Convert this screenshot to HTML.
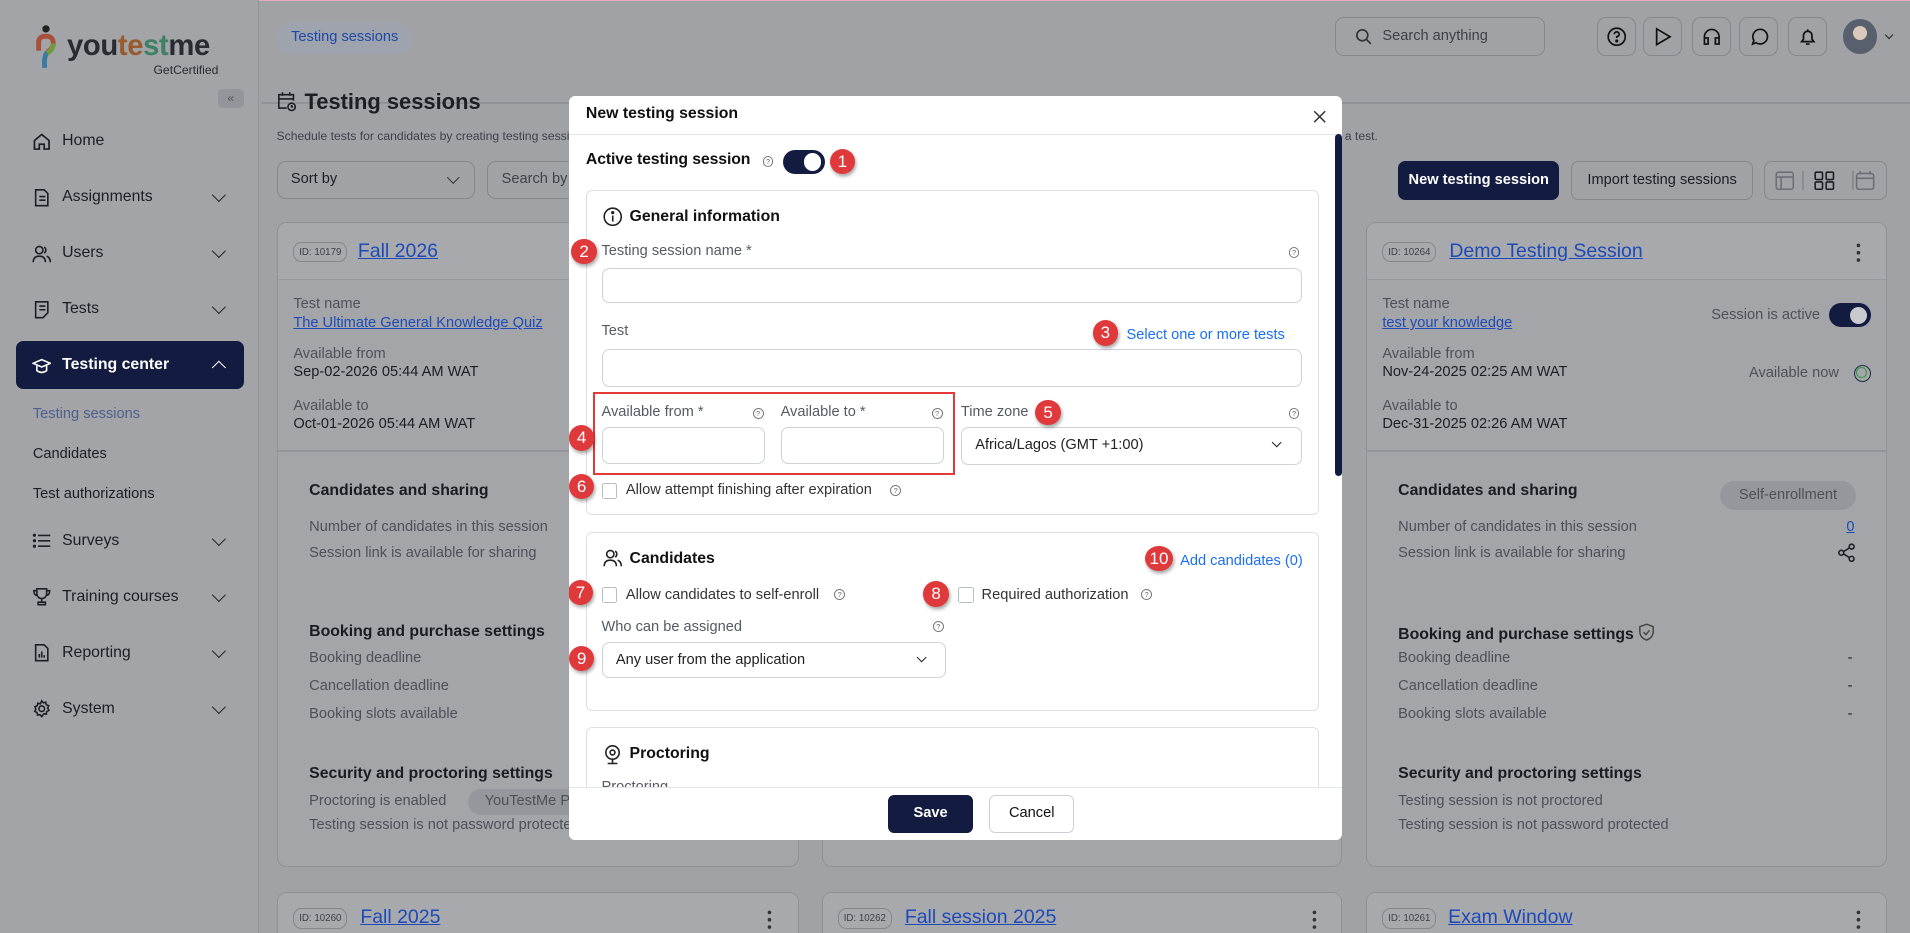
<!DOCTYPE html>
<html><head><meta charset="utf-8">
<style>
*{box-sizing:border-box;margin:0;padding:0}
html,body{width:1910px;height:933px;overflow:hidden;background:#a0a2a6}
#w{position:absolute;left:0;top:0;width:1568px;height:766px;zoom:1.21811;font-family:"Liberation Sans",sans-serif;color:#1c1e24;background:#a0a2a6;overflow:hidden}
.a{position:absolute;white-space:nowrap}
.side{position:absolute;left:0;top:0;width:213px;height:766px;background:#a2a4a8;border-right:1px solid #929499}
.nav{position:absolute;left:26px;font-size:13px;color:#1c1e24;display:flex;align-items:center;gap:9px}
.chev{position:absolute;left:176px;width:8px;height:8px;border-right:1.6px solid #1c1e24;border-bottom:1.6px solid #1c1e24;transform:rotate(45deg)}
.card{position:absolute;background:#a3a5a9;border:1px solid #8f9196;border-radius:8px;overflow:hidden}
.ch{position:absolute;left:0;right:0;top:0;height:47px;background:#a7a9ad;border-bottom:1px solid #96989d}
.id{position:absolute;font-size:8px;color:#3b3e44;border:1px solid #85878c;border-radius:7px;padding:3px 4px;background:#a7a9ad}
.lnk{color:#1e4ab8;text-decoration:underline}
.mut{color:#4d5057;font-size:12px}
.bt{font-weight:bold;font-size:13px;color:#1a1c22}
.ib{position:absolute;top:14px;width:32px;height:32px;border:1px solid #86888d;border-radius:7px;display:flex;align-items:center;justify-content:center}
.modal{position:absolute;left:467px;top:79px;width:635px;height:611px;background:#fff;border-radius:5px;overflow:hidden}
.box{position:absolute;left:14px;width:602px;border:1px solid #dde0e5;border-radius:5px}
.lab{position:absolute;font-size:12px;color:#555a63}
.inp{position:absolute;border:1px solid #cfd3d9;border-radius:6px;background:#fff}
.q{position:absolute;width:9px;height:9px;border:1px solid #777;border-radius:50%;font-size:6px;line-height:8px;text-align:center;color:#666}
.b{position:absolute;width:21px;height:21px;border-radius:50%;background:#e0393b;color:#fff;font-size:14px;line-height:21px;text-align:center;box-shadow:1px 2px 3px rgba(0,0,0,.35)}
.cb{position:absolute;width:13px;height:13px;border:1px solid #b8bcc3;border-radius:2px}
.blue{color:#1b6ef3;font-size:12px}
</style></head><body><div id="w">
<div style="position:absolute;left:0;top:0;right:0;height:1px;background:#e8a9c2"></div>
<!-- sidebar -->
<div class="side">
 <svg class="a" style="left:29px;top:20px" width="20" height="40" viewBox="0 0 20 40"><circle cx="9" cy="4" r="3" fill="#222"/><path d="M3 22 V15 Q3 10 9 10 Q15 10 15 16 Q15 20 10 23" stroke="#a8503a" stroke-width="4" fill="none"/><path d="M10 23 Q7 27 8 36" stroke="#3a7aa0" stroke-width="4" fill="none"/><path d="M15 16 Q15 21 10 24" stroke="#6f9a40" stroke-width="4" fill="none"/></svg>
 <div class="a" style="left:55px;top:25px;font-size:24px;font-weight:bold;letter-spacing:-0.3px;color:#2a2b30">you<span style="color:#9a5a30">te</span><span style="color:#3f7f63">st</span>me</div>
 <div class="a" style="left:126px;top:52px;font-size:10px;color:#2a2b30">GetCertified</div>
 <div class="a" style="left:179px;top:73px;width:21px;height:16px;background:#93959a;border-radius:4px;font-size:10px;color:#555;text-align:center;line-height:15px">«</div>
 <div class="nav" style="top:108px"><svg width="16" height="16" viewBox="0 0 16 16" fill="none" stroke="#1c1e24" stroke-width="1.4"><path d="M2 14V7L8 2l6 5v7h-4V10H6v4z"/></svg>Home</div>
 <div class="nav" style="top:154px"><svg width="16" height="16" viewBox="0 0 16 16" fill="none" stroke="#1c1e24" stroke-width="1.3"><path d="M3 1.5h7l3 3v10H3z M6 7h5 M6 10h5"/></svg>Assignments</div><div class="chev" style="top:156px"></div>
 <div class="nav" style="top:200px"><svg width="16" height="16" viewBox="0 0 16 16" fill="none" stroke="#1c1e24" stroke-width="1.3"><circle cx="6" cy="5" r="3"/><path d="M1 15q0-5 5-5t5 5M10 2.5a3 3 0 010 5M12 10q3 1 3 5"/></svg>Users</div><div class="chev" style="top:202px"></div>
 <div class="nav" style="top:246px"><svg width="16" height="16" viewBox="0 0 16 16" fill="none" stroke="#1c1e24" stroke-width="1.3"><path d="M3 1.5h10v9l-4 4H3z M6 5h5 M6 8h5"/></svg>Tests</div><div class="chev" style="top:248px"></div>
 <div class="a" style="left:13px;top:280px;width:187px;height:39px;background:#131b40;border-radius:6px"></div>
 <div class="nav" style="top:292px;color:#fff;font-weight:bold"><svg width="16" height="16" viewBox="0 0 16 16" fill="none" stroke="#fff" stroke-width="1.3"><path d="M1 6l7-3 7 3-7 3z M4 8v4q4 3 8 0V8"/></svg>Testing center</div><div class="chev" style="top:298px;border-color:#fff;transform:rotate(-135deg)"></div>
 <div class="a" style="left:27px;top:333px;font-size:12px;color:#4f5e8c">Testing sessions</div>
 <div class="a" style="left:27px;top:366px;font-size:12px">Candidates</div>
 <div class="a" style="left:27px;top:399px;font-size:12px">Test authorizations</div>
 <div class="nav" style="top:436px"><svg width="16" height="16" viewBox="0 0 16 16" fill="#1c1e24"><circle cx="2" cy="3.5" r="1.3"/><circle cx="2" cy="8" r="1.3"/><circle cx="2" cy="12.5" r="1.3"/><rect x="5" y="3" width="10" height="1.3"/><rect x="5" y="7.4" width="10" height="1.3"/><rect x="5" y="11.8" width="10" height="1.3"/></svg>Surveys</div><div class="chev" style="top:438px"></div>
 <div class="nav" style="top:482px"><svg width="16" height="16" viewBox="0 0 16 16" fill="none" stroke="#1c1e24" stroke-width="1.3"><path d="M4 1.5h8v4a4 4 0 01-8 0z M8 9.5v3 M5 14.5h6v-2H5z M4 3H1.5q0 4 3 4 M12 3h2.5q0 4-3 4"/></svg>Training courses</div><div class="chev" style="top:484px"></div>
 <div class="nav" style="top:528px"><svg width="16" height="16" viewBox="0 0 16 16" fill="none" stroke="#1c1e24" stroke-width="1.3"><path d="M3 1.5h7l3 3v10H3z M6 12V9 M8 12V7 M10 12v-2"/></svg>Reporting</div><div class="chev" style="top:530px"></div>
 <div class="nav" style="top:574px"><svg width="16" height="16" viewBox="0 0 16 16" fill="none" stroke="#1c1e24" stroke-width="1.3"><circle cx="8" cy="8" r="2.3"/><path d="M8 1.5l1.3 1.7 2-.6.4 2.1 2 .8-.8 2 1 1.9-1.9.9-.2 2.1-2.1-.2L8 14.5l-1.4-1.6-2.1.3-.3-2.1-1.9-.9.9-1.9-.8-2 2-.8.4-2.1 2 .6z"/></svg>System</div><div class="chev" style="top:576px"></div>
</div>
<!-- header -->
<div class="a" style="left:214px;top:84px;width:1354px;height:1px;background:#909297"></div>
<div class="a" style="left:227px;top:18px;width:112px;height:26px;background:#9ea3ad;border-radius:13px;font-size:12px;color:#1d4aa8;line-height:26px;text-align:center">Testing sessions</div>
<div class="a" style="left:1096px;top:14px;width:172px;height:32px;border:1px solid #86888d;border-radius:7px;font-size:12px;color:#3c3f46;line-height:30px;padding-left:38px">Search anything</div>
<svg class="a" style="left:1112px;top:23px" width="14" height="14" viewBox="0 0 14 14" fill="none" stroke="#333" stroke-width="1.4"><circle cx="6" cy="6" r="4.5"/><path d="M9.5 9.5L13 13"/></svg>
<div class="ib" style="left:1311px"><svg width="16" height="16" viewBox="0 0 16 16" fill="none" stroke="#111" stroke-width="1.4"><circle cx="8" cy="8" r="7"/><path d="M6 6a2 2 0 114 0q0 1.5-2 2v1"/><circle cx="8" cy="11.5" r=".6" fill="#111"/></svg></div>
<div class="ib" style="left:1349px"><svg width="16" height="16" viewBox="0 0 16 16" fill="none" stroke="#111" stroke-width="1.4"><path d="M3 1.5l11 6.5-11 6.5z"/></svg></div>
<div class="ib" style="left:1389px"><svg width="16" height="16" viewBox="0 0 16 16" fill="none" stroke="#111" stroke-width="1.4"><path d="M2 10V8a6 6 0 0112 0v2 M2 9h3v5H2z M11 9h3v5h-3z"/></svg></div>
<div class="ib" style="left:1428px"><svg width="16" height="16" viewBox="0 0 16 16" fill="none" stroke="#111" stroke-width="1.4"><path d="M3 14l1-3a6 6 0 111.8 1.9z"/></svg></div>
<div class="ib" style="left:1468px"><svg width="16" height="16" viewBox="0 0 16 16" fill="none" stroke="#111" stroke-width="1.4"><path d="M3 12h10l-1.5-2V7a3.5 3.5 0 00-7 0v3z M6.5 14h3 M8 2v1"/></svg></div>
<div class="a" style="left:1513px;top:16px;width:28px;height:28px;border-radius:50%;background:radial-gradient(circle at 50% 40%,#d9c8bb 0 25%,#57606c 27% 100%)"></div>
<div class="a" style="left:1548px;top:26px;width:5px;height:5px;border-right:1.4px solid #222;border-bottom:1.4px solid #222;transform:rotate(45deg)"></div>
<!-- page title -->
<svg class="a" style="left:227px;top:75px" width="16" height="17" viewBox="0 0 16 17" fill="none" stroke="#1c1e24" stroke-width="1.3"><path d="M8 14H1.5V3h12v5 M1.5 6.5h12 M4.5 1v3 M10.5 1v3"/><circle cx="12" cy="13" r="3"/><path d="M12 11.5V13h1.2"/></svg>
<div class="a" style="left:250px;top:73px;font-size:18px;font-weight:bold">Testing sessions</div>
<div class="a" style="left:227px;top:106px;font-size:10px;color:#3e4148">Schedule tests for candidates by creating testing sessions</div>
<div class="a" style="left:1104px;top:106px;font-size:10px;color:#3e4148">a test.</div>
<div class="a" style="left:227px;top:132px;width:163px;height:31px;border:1px solid #86888d;border-radius:7px;font-size:12px;line-height:29px;padding-left:11px">Sort by</div>
<div class="a" style="left:369px;top:142px;width:7px;height:7px;border-right:1.4px solid #333;border-bottom:1.4px solid #333;transform:rotate(45deg)"></div>
<div class="a" style="left:400px;top:132px;width:80px;height:31px;border:1px solid #86888d;border-radius:7px;font-size:12px;line-height:29px;padding-left:11px;color:#3e4148">Search by</div>
<div class="a" style="left:1148px;top:132px;width:132px;height:32px;background:#131b40;border-radius:6px;color:#fff;font-size:12px;font-weight:bold;line-height:32px;text-align:center">New testing session</div>
<div class="a" style="left:1290px;top:132px;width:149px;height:32px;border:1px solid #86888d;border-radius:6px;font-size:12px;line-height:30px;text-align:center">Import testing sessions</div>
<div class="a" style="left:1448px;top:132px;width:101px;height:32px;border:1px solid #86888d;border-radius:6px"></div>
<svg class="a" style="left:1457px;top:140px" width="85" height="16" viewBox="0 0 85 16" fill="none" stroke-width="1.3"><rect x="1" y="1" width="14" height="14" rx="2" stroke="#6c6f76"/><path d="M1 5h14 M5 5v10" stroke="#6c6f76"/><path d="M23 -2v20 M64 -2v20" stroke="#85878c"/><g stroke="#1c1e24"><rect x="33" y="1" width="6" height="6" rx="1"/><rect x="42" y="1" width="6" height="6" rx="1"/><rect x="33" y="9" width="6" height="6" rx="1"/><rect x="42" y="9" width="6" height="6" rx="1"/></g><rect x="67" y="2" width="14" height="13" rx="2" stroke="#6c6f76"/><path d="M67 6h14 M70 0v3 M78 0v3" stroke="#6c6f76"/></svg>
<!-- card 1 -->
<div class="card" style="left:227px;top:182px;width:429px;height:530px">
 <div class="ch"></div>
 <div class="id" style="left:13px;top:16px">ID: 10179</div>
 <div class="a lnk" style="left:66px;top:14px;font-size:16px">Fall 2026</div>
 <div class="a mut" style="left:13px;top:60px">Test name</div>
 <div class="a lnk" style="left:13px;top:76px;font-size:12px">The Ultimate General Knowledge Quiz</div>
 <div class="a mut" style="left:13px;top:101px">Available from</div>
 <div class="a" style="left:13px;top:116px;font-size:12px">Sep-02-2026 05:44 AM WAT</div>
 <div class="a mut" style="left:13px;top:144px">Available to</div>
 <div class="a" style="left:13px;top:159px;font-size:12px">Oct-01-2026 05:44 AM WAT</div>
 <div class="a" style="left:0;right:0;top:187px;height:1px;background:#93959a"></div>
 <div class="a bt" style="left:26px;top:213px">Candidates and sharing</div>
 <div class="a mut" style="left:26px;top:243px">Number of candidates in this session</div>
 <div class="a mut" style="left:26px;top:265px">Session link is available for sharing</div>
 <div class="a bt" style="left:26px;top:329px">Booking and purchase settings</div>
 <div class="a mut" style="left:26px;top:351px">Booking deadline</div>
 <div class="a mut" style="left:26px;top:374px">Cancellation deadline</div>
 <div class="a mut" style="left:26px;top:397px">Booking slots available</div>
 <div class="a bt" style="left:26px;top:445px">Security and proctoring settings</div>
 <div class="a mut" style="left:26px;top:468px">Proctoring is enabled</div>
 <div class="a" style="left:156px;top:465px;width:120px;height:21px;background:#95979c;border-radius:11px;font-size:12px;color:#4d5057;line-height:21px;padding-left:14px">YouTestMe Proctoring</div>
 <div class="a mut" style="left:26px;top:488px">Testing session is not password protected</div>
</div>
<div class="card" style="left:675px;top:182px;width:427px;height:530px"><div class="ch"></div></div>
<!-- card 3 -->
<div class="card" style="left:1121px;top:182px;width:428px;height:530px">
 <div class="ch"></div>
 <div class="id" style="left:13px;top:16px">ID: 10264</div>
 <div class="a lnk" style="left:68px;top:14px;font-size:16px">Demo Testing Session</div>
 <svg class="a" style="left:402px;top:17px" width="4" height="16"><circle cx="2" cy="2" r="1.5" fill="#333"/><circle cx="2" cy="8" r="1.5" fill="#333"/><circle cx="2" cy="14" r="1.5" fill="#333"/></svg>
 <div class="a mut" style="left:13px;top:60px">Test name</div>
 <div class="a lnk" style="left:13px;top:76px;font-size:12px">test your knowledge</div>
 <div class="a mut" style="left:283px;top:69px">Session is active</div>
 <div class="a" style="left:380px;top:66px;width:34px;height:20px;background:#131b40;border-radius:10px"><div style="position:absolute;right:3px;top:3px;width:14px;height:14px;border-radius:50%;background:#c8cacd"></div></div>
 <div class="a mut" style="left:13px;top:101px">Available from</div>
 <div class="a" style="left:13px;top:116px;font-size:12px">Nov-24-2025 02:25 AM WAT</div>
 <div class="a mut" style="left:314px;top:117px">Available now</div>
 <div class="a" style="left:400px;top:117px;width:14px;height:14px;border:1.5px solid #1f2a3c;border-radius:50%;background:#a3a5a9"><div style="margin:1px;width:9px;height:9px;border:1.5px solid #2e9a45;border-radius:50%"></div></div>
 <div class="a mut" style="left:13px;top:144px">Available to</div>
 <div class="a" style="left:13px;top:159px;font-size:12px">Dec-31-2025 02:26 AM WAT</div>
 <div class="a" style="left:0;right:0;top:187px;height:1px;background:#93959a"></div>
 <div class="a bt" style="left:26px;top:213px">Candidates and sharing</div>
 <div class="a" style="left:290px;top:212px;width:112px;height:24px;background:#95979c;border-radius:12px;font-size:12px;color:#4d5057;line-height:24px;text-align:center">Self-enrollment</div>
 <div class="a mut" style="left:26px;top:243px">Number of candidates in this session</div>
 <div class="a lnk" style="left:394px;top:243px;font-size:12px">0</div>
 <div class="a mut" style="left:26px;top:265px">Session link is available for sharing</div>
 <svg class="a" style="left:386px;top:263px" width="16" height="16" viewBox="0 0 16 16" fill="none" stroke="#1c1e24" stroke-width="1.3"><circle cx="3.5" cy="8" r="2"/><circle cx="12" cy="3" r="2"/><circle cx="12" cy="13" r="2"/><path d="M5.3 7l5-3 M5.3 9l5 3"/></svg>
 <div class="a bt" style="left:26px;top:329px">Booking and purchase settings <svg width="14" height="15" viewBox="0 0 14 15" fill="none" stroke="#444" stroke-width="1.2" style="vertical-align:-2px"><path d="M7 1l5.5 2v4q0 5-5.5 7Q1.5 12 1.5 7V3z M4.5 7.5l2 2 3-3.5"/></svg></div>
 <div class="a mut" style="left:26px;top:351px">Booking deadline</div><div class="a" style="left:395px;top:351px;font-size:12px">-</div>
 <div class="a mut" style="left:26px;top:374px">Cancellation deadline</div><div class="a" style="left:395px;top:374px;font-size:12px">-</div>
 <div class="a mut" style="left:26px;top:397px">Booking slots available</div><div class="a" style="left:395px;top:397px;font-size:12px">-</div>
 <div class="a bt" style="left:26px;top:445px">Security and proctoring settings</div>
 <div class="a mut" style="left:26px;top:468px">Testing session is not proctored</div>
 <div class="a mut" style="left:26px;top:488px">Testing session is not password protected</div>
</div>
<!-- row 2 -->
<div class="card" style="left:227px;top:732px;width:429px;height:60px"><div class="ch"></div><div class="id" style="left:13px;top:13px">ID: 10260</div><div class="a lnk" style="left:68px;top:11px;font-size:16px">Fall 2025</div><svg class="a" style="left:402px;top:14px" width="4" height="16"><circle cx="2" cy="2" r="1.5" fill="#333"/><circle cx="2" cy="8" r="1.5" fill="#333"/><circle cx="2" cy="14" r="1.5" fill="#333"/></svg></div>
<div class="card" style="left:675px;top:732px;width:427px;height:60px"><div class="ch"></div><div class="id" style="left:12px;top:13px">ID: 10262</div><div class="a lnk" style="left:67px;top:11px;font-size:16px">Fall session 2025</div><svg class="a" style="left:401px;top:14px" width="4" height="16"><circle cx="2" cy="2" r="1.5" fill="#333"/><circle cx="2" cy="8" r="1.5" fill="#333"/><circle cx="2" cy="14" r="1.5" fill="#333"/></svg></div>
<div class="card" style="left:1121px;top:732px;width:428px;height:60px"><div class="ch"></div><div class="id" style="left:13px;top:13px">ID: 10261</div><div class="a lnk" style="left:67px;top:11px;font-size:16px">Exam Window</div><svg class="a" style="left:402px;top:14px" width="4" height="16"><circle cx="2" cy="2" r="1.5" fill="#333"/><circle cx="2" cy="8" r="1.5" fill="#333"/><circle cx="2" cy="14" r="1.5" fill="#333"/></svg></div>
<!-- modal -->
<div class="modal">
 <div class="a" style="left:14px;top:7px;font-size:13px;font-weight:bold;color:#111">New testing session</div>
 <svg class="a" style="left:611px;top:11px" width="11" height="11" viewBox="0 0 11 11" stroke="#333" stroke-width="1.2"><path d="M1 1l9 9M10 1l-9 9"/></svg>
 <div class="a" style="left:0;right:0;top:31px;height:1px;background:#e2e5ea"></div>
 <div class="a" style="left:629px;top:31px;width:6px;height:281px;background:#131b40;border-radius:3px"></div>
 <div class="a" style="left:14px;top:45px;font-size:13px;font-weight:bold;color:#111;letter-spacing:-0.1px">Active testing session</div>
 <div class="q" style="left:159px;top:49px">?</div>
 <div class="a" style="left:176px;top:44px;width:34px;height:20px;background:#131b40;border-radius:10px"><div style="position:absolute;right:3px;top:3px;width:14px;height:14px;border-radius:50%;background:#fff"></div></div>
 <div class="b" style="left:214px;top:43px">1</div>
 <!-- general -->
 <div class="box" style="top:77px;height:267px">
  <svg class="a" style="left:13px;top:13px" width="16" height="16" viewBox="0 0 16 16" fill="none" stroke="#222" stroke-width="1.3"><circle cx="8" cy="8" r="7"/><path d="M8 7v5"/><circle cx="8" cy="4.6" r=".7" fill="#222"/></svg>
  <div class="a" style="left:35px;top:14px;font-size:13px;font-weight:bold;color:#111">General information</div>
  <div class="lab" style="left:12px;top:43px">Testing session name *</div>
  <div class="q" style="left:576px;top:46px">?</div>
  <div class="inp" style="left:12px;top:63px;width:575px;height:29px"></div>
  <div class="lab" style="left:12px;top:108px">Test</div>
  <div class="a blue" style="left:443px;top:112px">Select one or more tests</div>
  <div class="inp" style="left:12px;top:130px;width:575px;height:31px"></div>
  <div class="lab" style="left:12px;top:175px">Available from *</div><div class="q" style="left:136px;top:178px">?</div>
  <div class="lab" style="left:159px;top:175px">Available to *</div><div class="q" style="left:283px;top:178px">?</div>
  <div class="lab" style="left:307px;top:175px">Time zone</div><div class="q" style="left:576px;top:178px">?</div>
  <div class="inp" style="left:12px;top:194px;width:134px;height:30px"></div>
  <div class="inp" style="left:159px;top:194px;width:134px;height:30px"></div>
  <div class="inp" style="left:307px;top:194px;width:280px;height:31px;font-size:12px;line-height:29px;padding-left:11px;color:#222">Africa/Lagos (GMT +1:00)</div>
  <div class="a" style="left:563px;top:204px;width:6px;height:6px;border-right:1.5px solid #222;border-bottom:1.5px solid #222;transform:rotate(45deg)"></div>
  <div class="a" style="left:5px;top:165px;width:297px;height:68px;border:2px solid #e53935"></div>
  <div class="cb" style="left:12px;top:240px"></div>
  <div class="a" style="left:32px;top:239px;font-size:12px;color:#333">Allow attempt finishing after expiration</div>
  <div class="q" style="left:249px;top:241px">?</div>
 </div>
 <div class="b" style="left:2px;top:117px">2</div>
 <div class="b" style="left:430px;top:184px">3</div>
 <div class="b" style="left:0px;top:270px">4</div>
 <div class="b" style="left:383px;top:249px">5</div>
 <div class="b" style="left:0px;top:310px">6</div>
 <!-- candidates -->
 <div class="box" style="top:358px;height:147px">
  <svg class="a" style="left:13px;top:12px" width="16" height="16" viewBox="0 0 16 16" fill="none" stroke="#222" stroke-width="1.3"><circle cx="6" cy="5" r="3"/><path d="M1 15q0-5 5-5t5 5M10 2.5a3 3 0 010 5M12 10q3 1 3 5"/></svg>
  <div class="a" style="left:35px;top:14px;font-size:13px;font-weight:bold;color:#111">Candidates</div>
  <div class="a blue" style="left:487px;top:16px">Add candidates (0)</div>
  <div class="cb" style="left:12px;top:44px"></div>
  <div class="a" style="left:32px;top:44px;font-size:12px;color:#333">Allow candidates to self-enroll</div>
  <div class="q" style="left:203px;top:46px">?</div>
  <div class="cb" style="left:305px;top:44px"></div>
  <div class="a" style="left:324px;top:44px;font-size:12px;color:#333">Required authorization</div>
  <div class="q" style="left:455px;top:46px">?</div>
  <div class="lab" style="left:12px;top:70px">Who can be assigned</div>
  <div class="q" style="left:284px;top:72px">?</div>
  <div class="inp" style="left:12px;top:89px;width:283px;height:30px;font-size:12px;line-height:28px;padding-left:11px;color:#222">Any user from the application</div>
  <div class="a" style="left:272px;top:99px;width:6px;height:6px;border-right:1.5px solid #222;border-bottom:1.5px solid #222;transform:rotate(45deg)"></div>
 </div>
 <div class="b" style="left:473px;top:369px;width:23px">10</div>
 <div class="b" style="left:-1px;top:397px">7</div>
 <div class="b" style="left:291px;top:398px">8</div>
 <div class="b" style="left:0px;top:451px">9</div>
 <!-- proctoring -->
 <div class="box" style="top:518px;height:120px">
  <svg class="a" style="left:14px;top:13px" width="14" height="18" viewBox="0 0 14 18" fill="none" stroke="#222" stroke-width="1.3"><circle cx="7" cy="7" r="5.5"/><circle cx="7" cy="7" r="2"/><path d="M7 12.5v3 M3 16h8"/></svg>
  <div class="a" style="left:35px;top:14px;font-size:13px;font-weight:bold;color:#111">Proctoring</div>
  <div class="lab" style="left:12px;top:42px">Proctoring</div>
 </div>
 <div class="a" style="left:0;right:0;top:567px;height:44px;background:#fff;border-top:1px solid #e2e5ea"></div>
 <div class="a" style="left:262px;top:574px;width:70px;height:31px;background:#131b40;border-radius:5px;color:#fff;font-size:12px;font-weight:bold;line-height:31px;text-align:center">Save</div>
 <div class="a" style="left:345px;top:574px;width:70px;height:31px;border:1px solid #ccd0d6;border-radius:5px;color:#111;font-size:12px;line-height:29px;text-align:center">Cancel</div>
</div>
</div></body></html>
